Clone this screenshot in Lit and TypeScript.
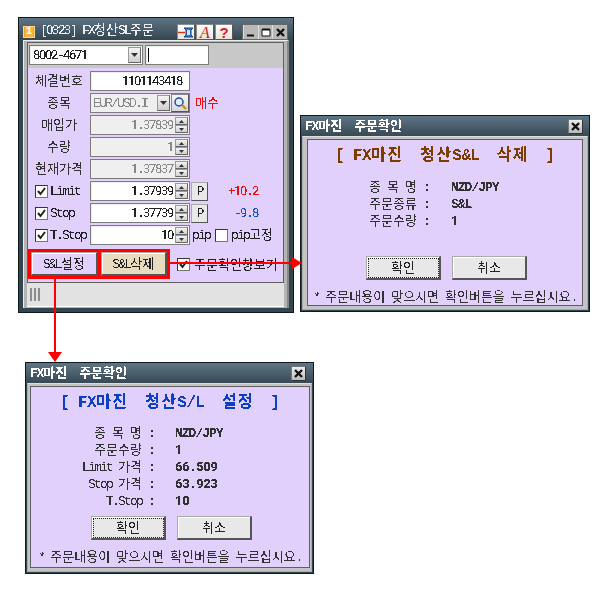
import { LitElement, html, css, svg } from "lit";
import { customElement } from "lit/decorators.js";

const classOf = (r: string) =>
  /[\uac00-\ud7a3]/.test(r) ? "k" : /[0-9]/.test(r) ? "n" : r[0] === " " ? "s" : "l";
const t = (s: string) =>
  (s.match(/[\uac00-\ud7a3]+|[0-9]+| +|[^\uac00-\ud7a3 0-9]+/g) || []).map(
    (r) => html`<span class=${classOf(r)}>${r}</span>`
  );

@customElement("app-root")
export class AppRoot extends LitElement {
  static styles = css`
    :host { display: block; position: relative; width: 615px; height: 600px; background: #fff; overflow: hidden;
      font-family: "Liberation Mono", monospace; color: #222; }
    * { box-sizing: border-box; }
    .txt { filter: url(#crisp); white-space: pre; line-height: 14px; }
    .k { font-family: "Noto Sans CJK KR", sans-serif; font-size: 13px; line-height: 14px; }
    .l { font-family: "Liberation Mono", monospace; font-size: 13px; line-height: 14px; letter-spacing: -1.8px; }
    .n { font-family: Roboto, sans-serif; font-size: 13px; line-height: 14px; letter-spacing: -1.3px; }
    .s { font-family: "Liberation Mono", monospace; font-size: 10px; line-height: 14px; }
    .win { position: absolute; border: 1px solid #101820; background: linear-gradient(#5f7585, #33454f 22px, #33454f); display: flex; flex-direction: column; }
    .main { left: 18px; top: 17px; width: 276px; height: 296px; padding: 0 4px 4px; }
    .d1 { left: 300px; top: 115px; width: 290px; height: 197px; padding: 0 1px 1px; }
    .d2 { left: 25px; top: 362px; width: 289px; height: 212px; padding: 0 1px 1px; }
    .title { display: flex; flex: none; }
    .main .title { height: 22px; align-items: flex-end; }
    .d1 .title, .d2 .title { height: 20px; align-items: center; padding: 0 5px 0 3px; justify-content: space-between; }
    .d2 .title { padding-right: 6px; }
    .ttext { margin-left: 5px; margin-bottom: 1px; color: #e8eef2; }
    .dt { color: #fff; }
    .dt .k, .dt .l { font-weight: 700; }
    .dt .l { letter-spacing: -1.2px; }
    .logo { width: 12px; height: 12px; margin-bottom: 2px; background: #f0a020; border: 1px solid #ffd890; display: flex; align-items: center; justify-content: center; }
    .logo i { width: 8px; height: 10px; background: #f6b73c; color: #fff; font: 700 10px/10px "Liberation Mono", monospace; text-align: center; }
    .tools { margin-left: auto; display: flex; gap: 1px; margin-right: 9px; }
    .tb { width: 18px; height: 16px; background: linear-gradient(#fff, #e8e4dc); border: 1px solid #8a8a8a; border-right-color: #555; border-bottom-color: #555; display: flex; align-items: center; justify-content: center; color: #e01818; }
    .tb b { font: 700 15px/15px "Liberation Sans", sans-serif; }
    .tb em { font: italic 400 16px/15px "Liberation Serif", serif; }
    .wbtns { display: flex; background: #b8b8b8; border: 1px solid #666; height: 16px; width: 46px; margin-right: 1px; }
    .wb { flex: 1; display: flex; align-items: center; justify-content: center; border-left: 1px solid #ddd; }
    .x { width: 15px; height: 15px; background: linear-gradient(#eee, #bbb); border: 1px solid #777; border-right-color: #333; border-bottom-color: #333; display: flex; align-items: center; justify-content: center; }
    .body { flex: 1; background: #c0c0c0; display: flex; flex-direction: column; min-height: 0; border-top: 1px solid #eee; }
    .main .body { padding: 1px 3px 0; background: #b4b4b4; border-left: 1px solid #eee; border-right: 2px solid #888; }
    .d1 .body, .d2 .body { background: #c4c4c4; border: 1px solid #aaa; border-top-color: #ddd; }
    .d1 .body { padding: 2px 4px 3px; }
    .d2 .body { padding: 2px 1px 3px 2px; }
    .panel { border: 1px solid #5f5f5f; background: #e0d0fb; display: flex; flex-direction: column; }
    .main .panel { height: 241px; flex: none; width: 257px; }
    .d1 .panel, .d2 .panel { flex: 1; align-items: stretch; min-height: 0; }
    .bar { height: 25px; flex: none; background: #c8c8c8; display: flex; align-items: center; padding: 0 0 1px 1px; gap: 2px; }
    .field { border: 1px solid #7c7c7c; background: #fff; height: 20px; display: flex; align-items: center; position: relative; box-shadow: inset 1px 1px 0 #eee; }
    .combo { width: 114px; padding-left: 3px; justify-content: space-between; padding-right: 1px; }
    .acct { width: 64px; padding-left: 2px; }
    .caret { width: 1px; height: 14px; background: #000; }
    .rows { display: flex; flex-direction: column; gap: 2px; padding: 3px 0 0; }
    .row { display: flex; align-items: center; height: 20px; }
    .lab { width: 62px; text-align: center; color: #333; }
    .chk { width: 62px; display: flex; align-items: center; padding-left: 7px; gap: 2px; }
    .cb { width: 13px; height: 13px; flex: none; background: #fff; border: 1px solid #777; border-top-color: #333; border-left-color: #333; display: flex; align-items: center; justify-content: center; }
    .inp { width: 100px; justify-content: flex-end; padding-right: 7px; }
    .inp.spin { padding-right: 1px; }
    .dis { background: #efefef; color: #888; }
    .val { margin-right: 2px; }
    .sp { width: 13px; height: 16px; display: flex; flex-direction: column; flex: none; }
    .sp span { flex: 1; background: linear-gradient(#f4f4f4, #cfcfcf); border: 1px solid #999; border-right-color: #666; border-bottom-color: #666; display: flex; align-items: center; justify-content: center; min-height: 0; }
    .down { width: 13px; height: 16px; flex: none; background: linear-gradient(#f4f4f4, #cfcfcf); border: 1px solid #999; border-right-color: #666; border-bottom-color: #666; display: flex; align-items: center; justify-content: center; }
    .sym { justify-content: flex-start; padding: 0 0 0 2px; }
    .sym .down { margin-left: auto; }
    .search { width: 18px; height: 18px; flex: none; margin-left: 1px; background: linear-gradient(#f6f6f6, #d8d8d8); border: 1px solid #888; border-right-color: #555; border-bottom-color: #555; display: flex; align-items: center; justify-content: center; }
    .extra { margin-left: 5px; }
    .pip { margin-left: 2px; }
    .gap5 { margin-left: 5px; }
    .gap3 { margin-left: 3px; }
    .red { color: #ee1010; }
    .blue { color: #1a4fc8; }
    .p { margin-left: 1px; width: 17px; height: 19px; background: #e8e8e8; border: 1px solid #aaa; border-right-color: #555; border-bottom-color: #555; display: flex; align-items: center; justify-content: center; }
    .pnl { margin-left: 20px; }
    .pnl2 { margin-left: 26px; }
    .bottom { display: flex; align-items: center; margin-top: 4px; }
    .redbox { display: flex; background: #f00; padding: 3px; gap: 3px; width: 142px; height: 30px; flex: none; }
    .mbtn { flex: 1; border: 1px solid #aaa; border-right: 2px solid #555; border-bottom: 2px solid #555; box-shadow: inset 1px 1px 0 #fff; display: flex; align-items: center; justify-content: center; background: #e0d0fb; }
    .mbtn.tan { background: #e8dcc0; }
    .showchk { display: flex; align-items: center; gap: 4px; margin-left: 7px; }
    .status { height: 24px; flex: none; width: 257px; background: #e2e2e2; display: flex; align-items: center; padding-left: 3px; gap: 1px; border-bottom: 1px solid #fff; }
    .status i { width: 2px; height: 13px; background: #8c8c8c; margin-right: 1px; }
    .head { text-align: center; height: 18px; flex: none; margin-top: 4px; }
    .head .txt { line-height: 18px; }
    .head .k, .head .l, .head .s { font-weight: 700; line-height: 18px; }
    .head .k { font-size: 16px; letter-spacing: 1.3px; }
    .head .l { font-size: 16px; letter-spacing: -.4px; }
    .head .s { font-size: 14px; }
    .brown { color: #7e3c00; }
    .bl { color: #0b3fc6; }
    .info { display: flex; flex-direction: column; gap: 3px; flex: none; color: #333; }
    .d1 .info { margin-top: 16px; }
    .d2 .info { margin-top: 15px; }
    .ir { display: flex; height: 14px; }
    .ik { text-align: right; }
    .d1 .ik { width: 121px; }
    .d2 .ik { width: 123px; }
    .iv { margin-left: 21px; }
    .d1 .iv { margin-left: 22px; }
    .iv .l { font-weight: 700; letter-spacing: -1px; }
    .iv .n { font-weight: 700; letter-spacing: -.3px; }
    .acts { display: flex; justify-content: center; gap: 11px; flex: none; }
    .d1 .acts { margin-top: 30px; padding-left: 3px; }
    .d2 .acts { margin-top: 10px; padding-left: 3px; }
    .btn { width: 75px; height: 24px; background: #e8e8e8; border: 1px solid #aaa; border-right: 2px solid #555; border-bottom: 2px solid #555; box-shadow: inset 1px 1px 0 #fff; display: flex; align-items: center; justify-content: center; }
    .btn.f { outline: 1px dotted #222; outline-offset: -3px; }
    .foot { text-align: center; margin-top: 8px; height: 14px; flex: none; color: #333; }
    .arrows { position: absolute; inset: 0; pointer-events: none; }
    .defs { position: absolute; width: 0; height: 0; }
  `;

  private txt(s: string, cls = "") {
    return html`<span class="txt ${cls}">${t(s)}</span>`;
  }

  private check(on = true) {
    return html`<span class="cb">${on
      ? html`<svg width="11" height="11" viewBox="0 0 11 11"><path d="M2 5l2.5 3L9 2" fill="none" stroke="#222" stroke-width="2"/></svg>`
      : ""}</span>`;
  }

  private tri(up: boolean, w = 7, h = 4) {
    const d = up ? `M0 ${h}L${w / 2} 0L${w} ${h}Z` : `M0 0L${w} 0L${w / 2} ${h}Z`;
    return html`<svg width=${w} height=${h} viewBox="0 0 ${w} ${h}"><path d=${d} fill="#333"/></svg>`;
  }

  private spin() {
    return html`<span class="sp"><span>${this.tri(true, 5, 3)}</span><span>${this.tri(false, 5, 3)}</span></span>`;
  }

  private closeX() {
    return html`<svg width="9" height="9" viewBox="0 0 9 9"><path d="M1 1l7 7M8 1L1 8" stroke="#111" stroke-width="2.4"/></svg>`;
  }

  private confirm(cls: string, headCls: string, head: string, rows: [string, string][]) {
    return html`<section class="win ${cls}">
      <div class="title"><span class="dt">${this.txt("FX마진  주문확인")}</span><span class="x">${this.closeX()}</span></div>
      <div class="body"><div class="panel">
        <div class="head ${headCls}">${this.txt(head)}</div>
        <div class="info">${rows.map(([k, v]) => html`<div class="ir"><span class="ik">${this.txt(k)}</span><span class="iv">${this.txt(v)}</span></div>`)}</div>
        <div class="acts"><span class="btn f">${this.txt("확인")}</span><span class="btn">${this.txt("취소")}</span></div>
        <div class="foot">${this.txt("* 주문내용이 맞으시면 확인버튼을 누르십시요.")}</div>
      </div></div>
    </section>`;
  }

  render() {
    return html`
      <svg class="defs"><defs><filter id="crisp" x="-5%" y="-20%" width="110%" height="140%">
        <feComponentTransfer><feFuncA type="discrete" tableValues="0 0 1 1"/></feComponentTransfer>
      </filter></defs></svg>

      <section class="win main">
        <div class="title">
          <span class="logo"><i>1</i></span>
          <span class="ttext">${this.txt("[0323] FX청산SL주문")}</span>
          <span class="tools">
            <span class="tb"><svg width="16" height="11" viewBox="0 0 16 11"><path d="M0 5.5h7" stroke="#e03010" stroke-width="1.4"/><path d="M6 1h9l-2 2v5l2 2H6l2-2V3z" fill="#3a78c8" stroke="#123c80"/><path d="M9 3h3v5H9z" fill="#cfe2fa"/></svg></span>
            <span class="tb"><em>A</em></span>
            <span class="tb"><b>?</b></span>
          </span>
          <span class="wbtns">
            <span class="wb"><svg width="9" height="9" viewBox="0 0 9 9"><path d="M1 7.5h7" stroke="#111" stroke-width="2"/></svg></span>
            <span class="wb"><svg width="10" height="9" viewBox="0 0 10 9"><path d="M1 1.5h8V8H1z" fill="#fff" stroke="#111"/><path d="M1 1.5h8" stroke="#111" stroke-width="2"/></svg></span>
            <span class="wb">${this.closeX()}</span>
          </span>
        </div>
        <div class="body">
          <div class="panel">
            <div class="bar">
              <span class="field combo">${this.txt("8002-4671")}<span class="down">${this.tri(false, 7, 4)}</span></span>
              <span class="field acct"><span class="caret"></span></span>
            </div>
            <div class="rows">
              <div class="row"><span class="lab">${this.txt("체결번호")}</span><span class="field inp">${this.txt("1101143418")}</span></div>
              <div class="row"><span class="lab">${this.txt("종목")}</span>
                <span class="field inp dis sym">${this.txt("EUR/USD.I")}<span class="down">${this.tri(false, 7, 4)}</span>
                  <span class="search"><svg width="15" height="15" viewBox="0 0 15 15"><circle cx="6" cy="6" r="4" fill="#dcecff" stroke="#1c4fa0" stroke-width="1.5"/><path d="M9 9l4 4" stroke="#c98a20" stroke-width="2.4"/></svg></span></span>
                <span class="extra red">${this.txt("매수")}</span></div>
              <div class="row"><span class="lab">${this.txt("매입가")}</span><span class="field inp spin dis"><span class="val">${this.txt("1.37839")}</span>${this.spin()}</span></div>
              <div class="row"><span class="lab">${this.txt("수량")}</span><span class="field inp spin dis"><span class="val">${this.txt("1")}</span>${this.spin()}</span></div>
              <div class="row"><span class="lab">${this.txt("현재가격")}</span><span class="field inp spin dis"><span class="val">${this.txt("1.37837")}</span>${this.spin()}</span></div>
              <div class="row"><span class="chk">${this.check()}${this.txt("Limit")}</span><span class="field inp spin"><span class="val">${this.txt("1.37939")}</span>${this.spin()}</span><span class="p">${this.txt("P")}</span><span class="pnl red">${this.txt("+10.2")}</span></div>
              <div class="row"><span class="chk">${this.check()}${this.txt("Stop")}</span><span class="field inp spin"><span class="val">${this.txt("1.37739")}</span>${this.spin()}</span><span class="p">${this.txt("P")}</span><span class="pnl2 blue">${this.txt("-9.8")}</span></div>
              <div class="row"><span class="chk">${this.check()}${this.txt("T.Stop")}</span><span class="field inp spin"><span class="val">${this.txt("10")}</span>${this.spin()}</span><span class="pip">${this.txt("pip")}</span><span class="gap5">${this.check(false)}</span><span class="gap3">${this.txt("pip고정")}</span></div>
            </div>
            <div class="bottom">
              <div class="redbox"><span class="mbtn">${this.txt("S&L설정")}</span><span class="mbtn tan">${this.txt("S&L삭제")}</span></div>
              <span class="showchk">${this.check()}${this.txt("주문확인창보기")}</span>
            </div>
          </div>
          <div class="status"><i></i><i></i><i></i></div>
        </div>
      </section>

      ${this.confirm("d1", "brown", "[ FX마진  청산S&L  삭제  ]", [
        ["종 목 명 :", "NZD/JPY"],
        ["주문종류 :", "S&L"],
        ["주문수량 :", "1"],
      ])}
      ${this.confirm("d2", "bl", "[ FX마진  청산S/L  설정  ]", [
        ["종 목 명 :", "NZD/JPY"],
        ["주문수량 :", "1"],
        ["Limit 가격 :", "66.509"],
        ["Stop 가격 :", "63.923"],
        ["T.Stop :", "10"],
      ])}

      <svg class="arrows" width="615" height="600" viewBox="0 0 615 600">
        ${svg`<path d="M170 263H293" stroke="#f00" stroke-width="2"/>
        <path d="M292 257L302 263L292 269Z" fill="#f00"/>
        <path d="M55 279V353" stroke="#f00" stroke-width="2"/>
        <path d="M48 352H62L55 362Z" fill="#f00"/>`}
      </svg>
    `;
  }
}
